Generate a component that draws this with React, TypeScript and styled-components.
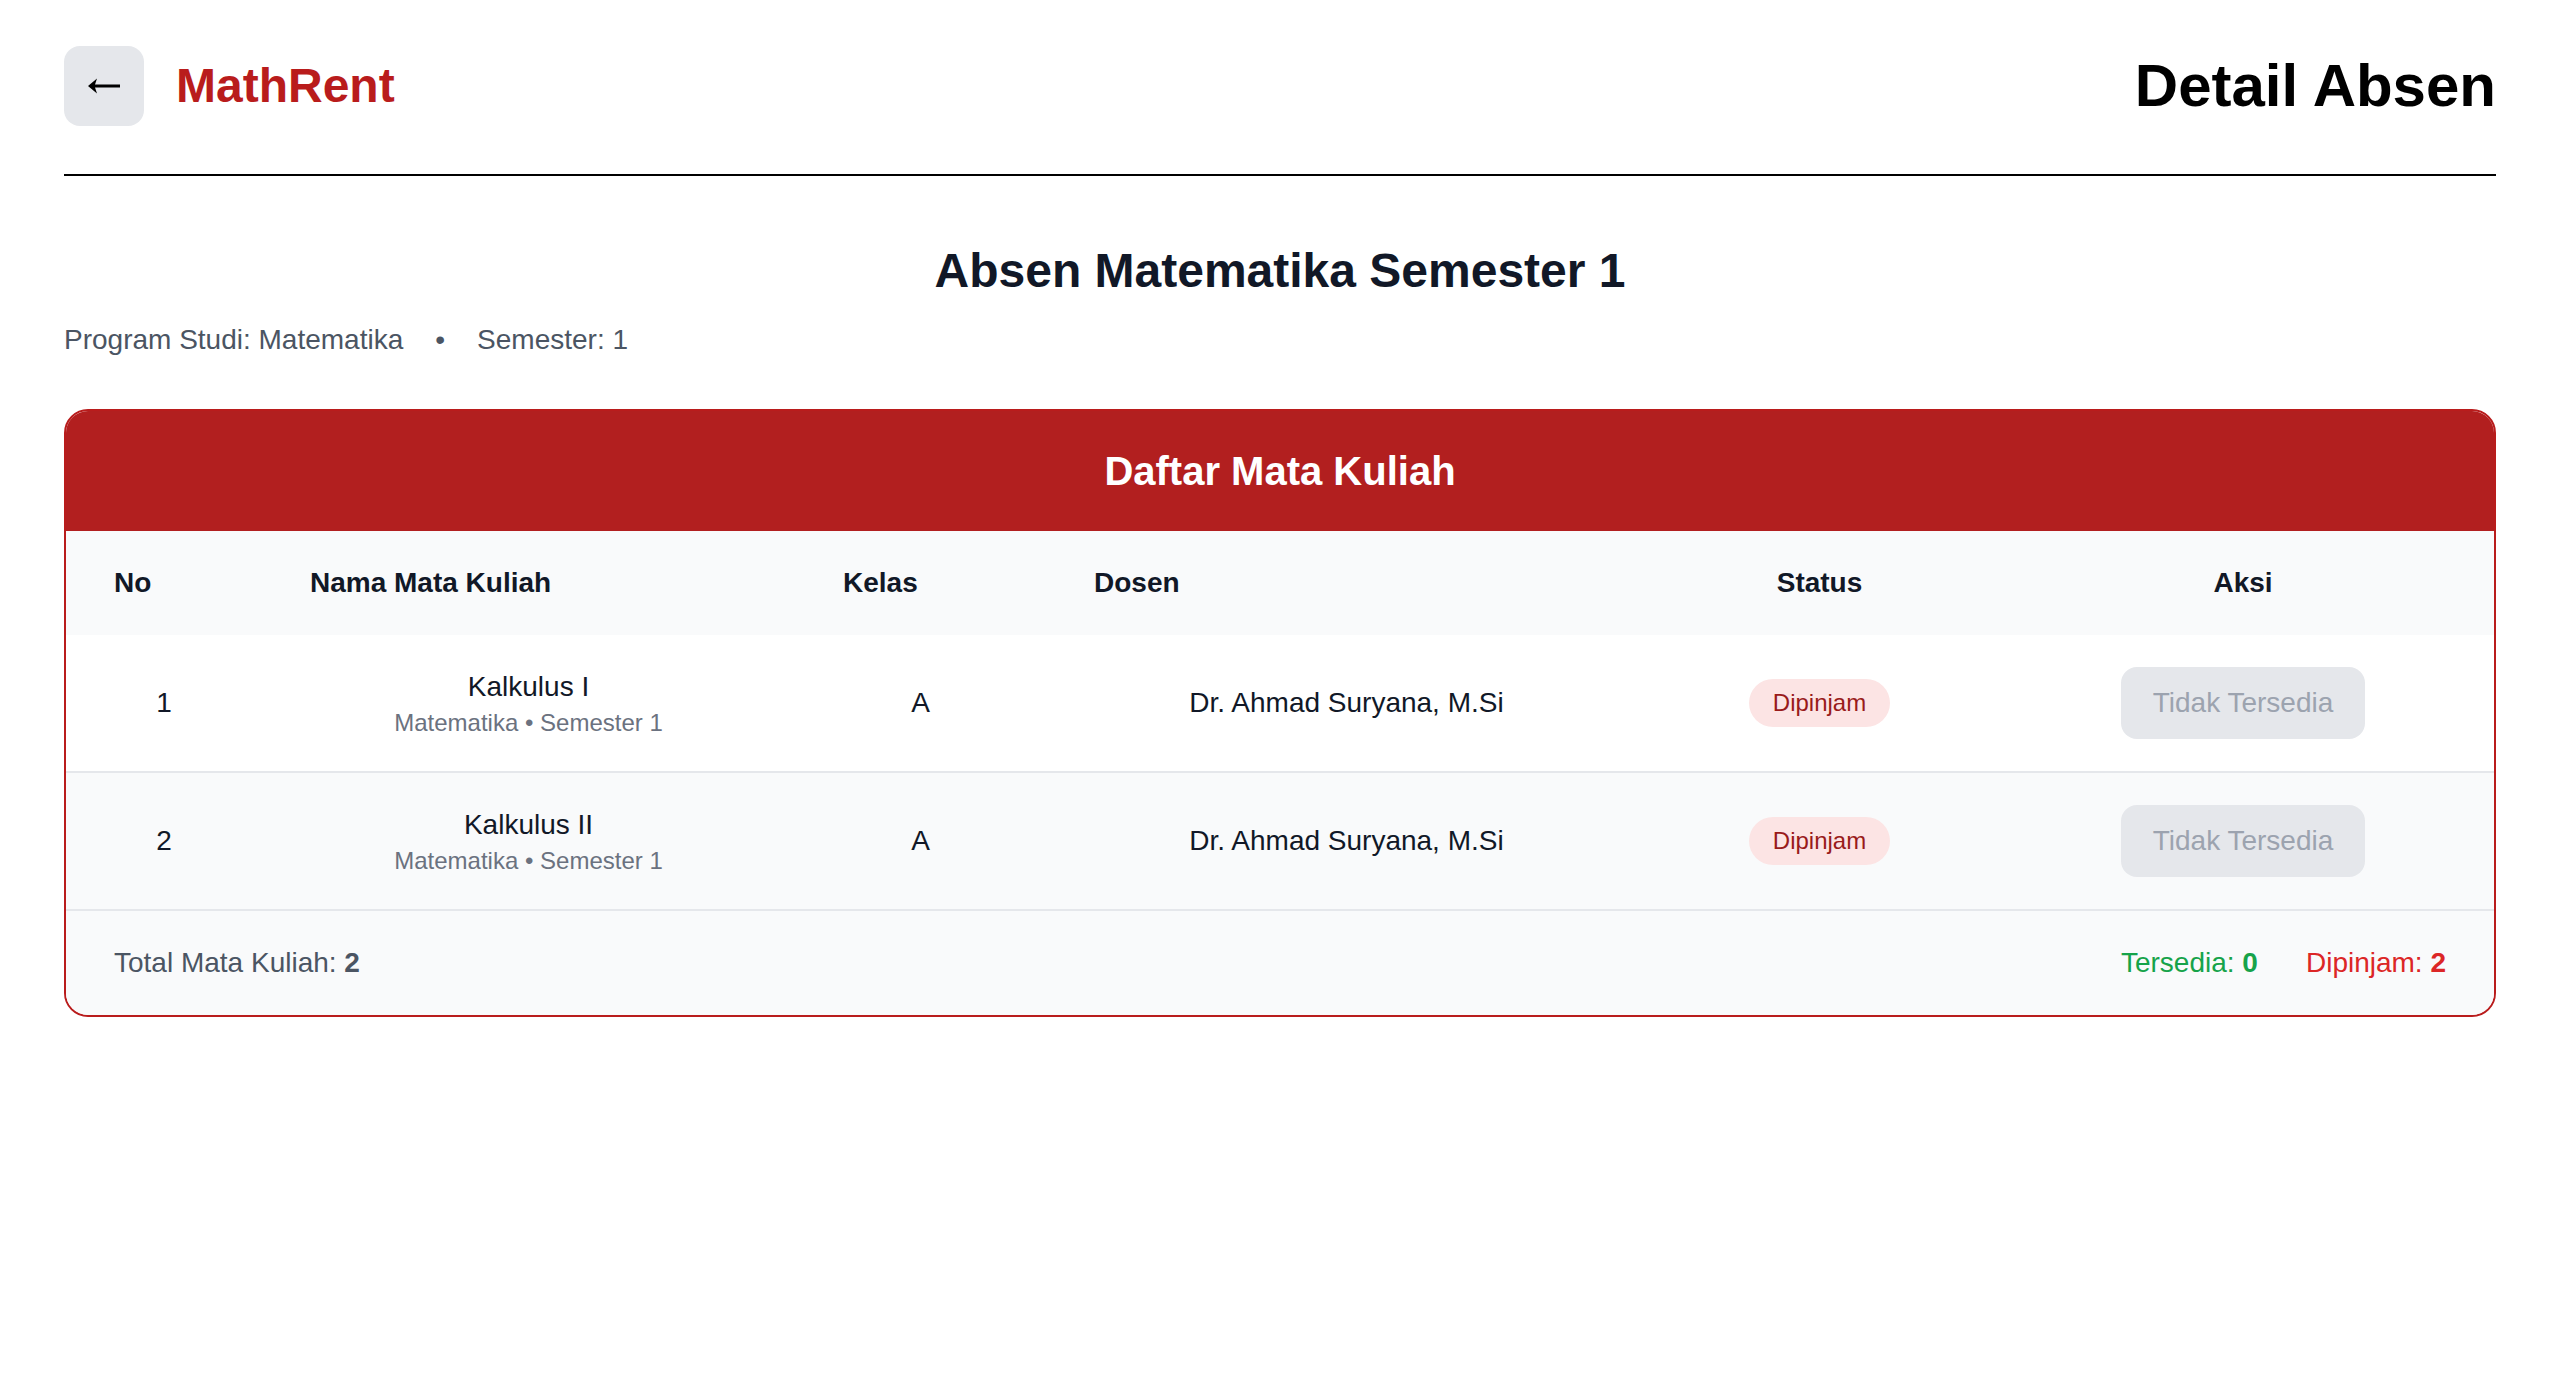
import React from "react";
import styled, { createGlobalStyle } from "styled-components";

const GlobalStyle = createGlobalStyle`
  html, body {
    margin: 0;
    padding: 0;
    background: #ffffff;
    font-family: "Liberation Sans", Arial, Helvetica, sans-serif;
    -webkit-font-smoothing: antialiased;
  }
  * { box-sizing: border-box; }
`;

const Page = styled.div`
  padding: 0 64px;
  min-height: 1374px;
`;

const Header = styled.header`
  display: flex;
  align-items: center;
  justify-content: space-between;
  padding: 46px 0 48px;
  border-bottom: 2px solid #000000;
`;

const Brand = styled.div`
  display: flex;
  align-items: center;
  gap: 32px;
`;

const BackButton = styled.button`
  width: 80px;
  height: 80px;
  border: none;
  border-radius: 16px;
  background: #e5e7eb;
  display: flex;
  align-items: center;
  justify-content: center;
  padding: 0;
  cursor: pointer;
`;

const Logo = styled.span`
  font-size: 48px;
  line-height: 64px;
  font-weight: 700;
  color: #b91c1c;
`;

const PageTitle = styled.h1`
  margin: 0;
  font-size: 60px;
  line-height: 72px;
  font-weight: 700;
  color: #000000;
`;

const Main = styled.main`
  padding-top: 63px;
`;

const Title = styled.h2`
  margin: 0 0 17px;
  text-align: center;
  font-size: 48px;
  line-height: 64px;
  font-weight: 700;
  color: #111827;
`;

const Meta = styled.div`
  display: flex;
  gap: 32px;
  font-size: 28px;
  line-height: 40px;
  color: #4b5563;
  margin-bottom: 49px;
`;

const Card = styled.section`
  border: 2px solid #b91c1c;
  border-radius: 24px;
  overflow: hidden;
  background: #ffffff;
`;

const CardHeader = styled.div`
  background: #b21f1f;
  color: #ffffff;
  text-align: center;
  font-size: 40px;
  line-height: 56px;
  font-weight: 700;
  padding: 32px 0;
`;

const Table = styled.table`
  width: 100%;
  border-collapse: collapse;
  table-layout: fixed;
`;

const HeadRow = styled.tr`
  background: #f9fafb;
`;

const Th = styled.th<{ $align?: "left" | "center" }>`
  padding: 32px 48px;
  font-size: 28px;
  line-height: 40px;
  font-weight: 700;
  color: #111827;
  text-align: ${(p) => p.$align ?? "left"};
`;

const Row = styled.tr<{ $striped?: boolean }>`
  background: ${(p) => (p.$striped ? "#f9fafb" : "#ffffff")};
  & + & {
    border-top: 2px solid #e5e7eb;
  }
`;

const Td = styled.td`
  padding: 32px 48px;
  font-size: 28px;
  line-height: 40px;
  color: #111827;
  text-align: center;
  vertical-align: middle;
`;

const CourseName = styled.div`
  font-size: 28px;
  line-height: 40px;
  font-weight: 500;
  color: #111827;
`;

const CourseSub = styled.div`
  font-size: 24px;
  line-height: 32px;
  color: #6b7280;
`;

const Badge = styled.span`
  display: inline-block;
  padding: 8px 24px;
  border-radius: 9999px;
  background: #fce4e4;
  color: #991b1b;
  font-size: 24px;
  line-height: 32px;
`;

const DisabledButton = styled.button`
  border: none;
  border-radius: 16px;
  background: #e5e7eb;
  color: #9ca3af;
  font-family: inherit;
  font-size: 28px;
  line-height: 40px;
  padding: 16px 32px;
  cursor: not-allowed;
`;

const Footer = styled.div`
  display: flex;
  align-items: center;
  justify-content: space-between;
  padding: 32px 48px;
  background: #f9fafb;
  border-top: 2px solid #e5e7eb;
  font-size: 28px;
  line-height: 40px;
  color: #4b5563;
`;

const Stats = styled.div`
  display: flex;
  gap: 48px;
`;

const Stat = styled.span<{ $color: string }>`
  color: ${(p) => p.$color};
`;

const Strong = styled.b`
  font-weight: 700;
`;

const ArrowIcon = () => (
  <svg width="34" height="18" viewBox="0 0 34 18" aria-hidden="true">
    <path d="M1 9 L10 1.5 L8 7.5 H33 V10.5 H8 L10 16.5 Z" fill="#000" />
  </svg>
);

const courses = [
  { no: 1, name: "Kalkulus I", kelas: "A", dosen: "Dr. Ahmad Suryana, M.Si" },
  { no: 2, name: "Kalkulus II", kelas: "A", dosen: "Dr. Ahmad Suryana, M.Si" },
];

const colWidths = [196, 533, 251, 601, 345, 502];

export default function App() {
  return (
    <>
      <GlobalStyle />
      <Page>
        <Header>
          <Brand>
            <BackButton aria-label="Kembali">
              <ArrowIcon />
            </BackButton>
            <Logo>MathRent</Logo>
          </Brand>
          <PageTitle>Detail Absen</PageTitle>
        </Header>
        <Main>
          <Title>Absen Matematika Semester 1</Title>
          <Meta>
            <span>Program Studi: Matematika</span>
            <span>•</span>
            <span>Semester: 1</span>
          </Meta>
          <Card>
            <CardHeader>Daftar Mata Kuliah</CardHeader>
            <Table>
              <colgroup>
                {colWidths.map((w, i) => (
                  <col key={i} style={{ width: w }} />
                ))}
              </colgroup>
              <thead>
                <HeadRow>
                  <Th>No</Th>
                  <Th>Nama Mata Kuliah</Th>
                  <Th>Kelas</Th>
                  <Th>Dosen</Th>
                  <Th $align="center">Status</Th>
                  <Th $align="center">Aksi</Th>
                </HeadRow>
              </thead>
              <tbody>
                {courses.map((c, i) => (
                  <Row key={c.no} $striped={i % 2 === 1}>
                    <Td>{c.no}</Td>
                    <Td>
                      <CourseName>{c.name}</CourseName>
                      <CourseSub>Matematika • Semester 1</CourseSub>
                    </Td>
                    <Td>{c.kelas}</Td>
                    <Td>{c.dosen}</Td>
                    <Td>
                      <Badge>Dipinjam</Badge>
                    </Td>
                    <Td>
                      <DisabledButton disabled>Tidak Tersedia</DisabledButton>
                    </Td>
                  </Row>
                ))}
              </tbody>
            </Table>
            <Footer>
              <span>
                Total Mata Kuliah: <Strong>2</Strong>
              </span>
              <Stats>
                <Stat $color="#16a34a">
                  Tersedia: <Strong>0</Strong>
                </Stat>
                <Stat $color="#dc2626">
                  Dipinjam: <Strong>2</Strong>
                </Stat>
              </Stats>
            </Footer>
          </Card>
        </Main>
      </Page>
    </>
  );
}
